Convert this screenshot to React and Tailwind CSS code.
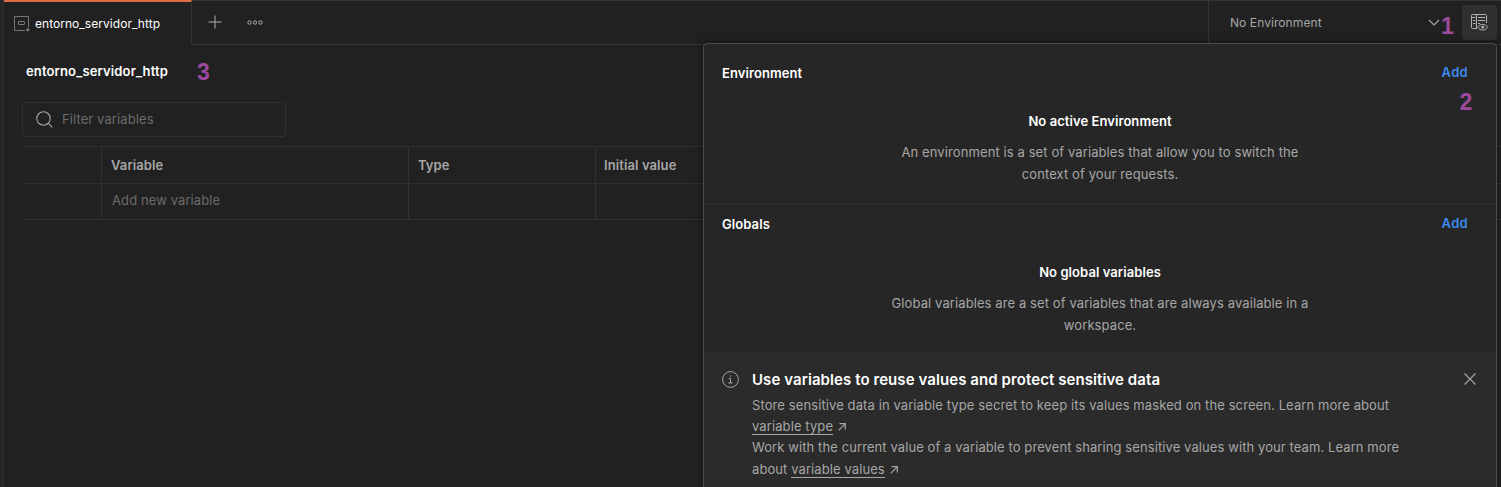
import React from "react";

function EnvironmentIcon() {
  return (
    <svg className="h-4 w-4 shrink-0 text-[#777777]" viewBox="0 0 16 16" fill="none" stroke="currentColor">
      <path d="M11 14.500H.5V.5h14V11" />
      <rect x="4.500" y="5.500" width="6" height="3" rx="0.500" />
      <rect x="12.300" y="12.300" width="3" height="3" rx="1" fill="currentColor" stroke="none" />
    </svg>
  );
}

function QuickLookIcon() {
  return (
    <svg className="h-[17px] w-[17px] text-[#b0b0b0]" viewBox="0 0 17 17" fill="none" stroke="currentColor">
      <path d="M6 14.500H1.500a1 1 0 0 1-1-1V1.500a1 1 0 0 1 1-1h13a1 1 0 0 1 1 1V9M5.500.5v14M.5 3.500h4M2 6.500h2.500M2 9.500h2.500M7 3.500h7M7 6.500h7M7 9.500h2" />
      <path d="M6.800 13.200c1.200-1.900 2.900-2.800 4.900-2.800s3.700.9 4.800 2.800c-1.100 1.900-2.800 2.800-4.800 2.800s-3.700-.9-4.900-2.800Z" />
      <circle cx="11.700" cy="13.200" r="1.100" fill="currentColor" />
    </svg>
  );
}

function LinkArrow() {
  return (
    <svg className="ml-[5px] inline-block h-[8px] w-[8px] align-baseline" viewBox="0 0 8 8" fill="none" stroke="currentColor" strokeWidth="1.2">
      <path d="M.7 7.300 7.200.8M1.500.7h5.800v5.800" />
    </svg>
  );
}

function TabBar() {
  return (
    <header className="flex h-[45px] shrink-0">
      <div className="flex w-[188px] gap-[5px] border-t-2 border-r border-t-[#de6e47] border-r-[#343434] pt-[14px] pl-[10px]">
        <EnvironmentIcon />
        <span className="text-[12px] leading-4 tracking-[0.04px] text-[#ffffff]">entorno_servidor_http</span>
      </div>
      <div className="flex flex-1 border-t border-b border-[#343434]">
        <svg className="mt-[14px] ml-[16px] h-[14px] w-[14px] text-[#b0b0b0]" viewBox="0 0 14 14" stroke="currentColor">
          <path d="M7 .5v13M.5 7h13" />
        </svg>
        <svg className="mt-[19px] ml-[25px] h-[5px] w-[16px] text-[#b0b0b0]" viewBox="0 0 16 5" fill="none" stroke="currentColor">
          <circle cx="2.500" cy="2.500" r="1.700" />
          <circle cx="8" cy="2.500" r="1.700" />
          <circle cx="13.500" cy="2.500" r="1.700" />
        </svg>
      </div>
      <div className="flex w-[293px] border-t border-b border-l border-[#343434] pl-[21px]">
        <span className="w-[198px] pt-[14px] text-[12px] leading-4 tracking-[0.08px] text-[#a6a6a6]">No Environment</span>
        <svg className="mt-[18px] h-[7px] w-[12px] text-[#a6a6a6]" viewBox="0 0 12 7" fill="none" stroke="currentColor" strokeWidth="1.100">
          <path d="m1 1 5 5 5-5" />
        </svg>
        <span className="ml-px w-[13px] pt-[12px] text-center font-['Liberation_Sans',sans-serif] text-[23px] leading-[26px] font-bold text-[#9c4a9c]">1</span>
        <div className="mt-1 ml-2 flex h-[35px] w-[35px] items-center justify-center rounded bg-[#303030]">
          <QuickLookIcon />
        </div>
      </div>
    </header>
  );
}

function VariableTable() {
  return (
    <div className="mt-[9px] ml-[18px] grid grid-cols-[80px_307px_187px_1fr] grid-rows-[37px_35px] border-t border-b border-[#303030] text-[13px] leading-4">
      <div className="border-r border-b border-[#303030]" />
      <div className="border-r border-b border-[#303030] pt-[10px] pl-[9px] font-semibold tracking-[0.1px] text-[#a6a6a6]">Variable</div>
      <div className="border-r border-b border-[#303030] pt-[10px] pl-[9px] font-semibold tracking-[0.1px] text-[#a6a6a6]">Type</div>
      <div className="border-b border-[#303030] pt-[10px] pl-[8px] font-semibold tracking-[0.1px] text-[#a6a6a6]">Initial value</div>
      <div className="border-r border-[#303030]" />
      <div className="border-r border-[#303030] pt-[8px] pl-[10px] tracking-[0.1px] text-[#6b6b6b]">Add new variable</div>
      <div className="border-r border-[#303030]" />
      <div />
    </div>
  );
}

function Editor() {
  return (
    <main>
      <div className="flex h-[57px] pl-[22px]">
        <h1 className="w-[171px] pt-[18px] text-[13px] leading-4 font-semibold tracking-[0.14px] text-white">entorno_servidor_http</h1>
        <span className="pt-[14px] font-['Liberation_Sans',sans-serif] text-[23px] leading-[26px] font-bold text-[#9c4a9c]">3</span>
      </div>
      <div className="ml-[18px] flex h-[35px] w-[264px] items-center rounded-[3px] border border-[#303030] pl-[13px] text-[#6b6b6b]">
        <svg className="h-[17px] w-[17px] text-[#a6a6a6]" viewBox="0 0 17 17" fill="none" stroke="currentColor" strokeWidth="1.100">
          <circle cx="7.500" cy="7.500" r="6.700" />
          <path d="m12.300 12.300 4 4" />
        </svg>
        <span className="-mt-px ml-[9px] text-[13px] leading-4 tracking-[0.1px]">Filter variables</span>
      </div>
      <VariableTable />
    </main>
  );
}

function Section({ title, heading, lines, annotation, className }) {
  return (
    <section className={className}>
      <div className="flex h-[48px] justify-between pr-[28px]">
        <h2 className="leading-4 font-semibold tracking-[0.08px] text-white">{title}</h2>
        <div className="relative -mt-px leading-4 font-semibold tracking-[0.3px] text-[#3d8bf0]">
          Add
          {annotation && (
            <span className="absolute top-[25px] left-[18px] font-['Liberation_Sans',sans-serif] text-[23px] leading-[26px] font-bold tracking-normal text-[#9c4a9c]">{annotation}</span>
          )}
        </div>
      </div>
      <div className="pr-[18px] text-center">
        <h3 className="leading-4 font-semibold tracking-[0.07px] text-white">{heading}</h3>
        <p className="mt-[12px] leading-[22px] tracking-[0.1px] text-[#a6a6a6]">
          {lines[0]}
          <br />
          {lines[1]}
        </p>
      </div>
    </section>
  );
}

function EnvironmentPanel() {
  return (
    <aside className="absolute top-[43px] left-[703px] flex h-[460px] w-[794px] flex-col rounded-[4px] border border-[#4c4c4c] bg-[#262626] text-[13px] shadow-[0_0_8px_rgba(0,0,0,0.4)]">
      <Section
        className="h-[160px] border-b border-[#303030] pt-[21px] pl-[18px]"
        title="Environment"
        heading="No active Environment"
        lines={["An environment is a set of variables that allow you to switch the", "context of your requests."]}
        annotation="2"
      />
      <Section
        className="h-[149px] pt-[12px] pl-[18px]"
        title="Globals"
        heading="No global variables"
        lines={["Global variables are a set of variables that are always available in a", "workspace."]}
      />
      <section className="flex flex-1 bg-[#2b2b2b] pt-[18px] pl-[18px]">
        <svg className="h-[17px] w-[17px] shrink-0 text-[#a6a6a6]" viewBox="0 0 17 17" fill="none" stroke="currentColor">
          <circle cx="8.500" cy="8.500" r="7.900" />
          <path d="M6.800 7.500h1.700v4.500M6.300 12h4.400M8.500 4.300v1.400" />
        </svg>
        <div className="ml-[13px] w-[711px] text-[#a6a6a6]">
          <h2 className="text-[15px] leading-[18px] font-semibold tracking-[0.08px] text-white">Use variables to reuse values and protect sensitive data</h2>
          <p className="mt-[6px] leading-[21px] tracking-[0.1px]">
            Store sensitive data in variable type secret to keep its values masked on the screen. Learn more about
            <br />
            <a className="border-b border-[#a6a6a6]">variable type</a>
            <LinkArrow />
          </p>
          <p className="-mt-px leading-[22px] tracking-[0.09px]">
            Work with the current value of a variable to prevent sharing sensitive values with your team. Learn more
            <br />
            about <a className="border-b border-[#a6a6a6]">variable values</a>
            <LinkArrow />
          </p>
        </div>
        <svg className="mt-[2px] ml-px h-[12px] w-[12px] text-[#a6a6a6]" viewBox="0 0 12 12" stroke="currentColor" strokeWidth="1.100">
          <path d="m.5.5 11 11M11.500.5l-11 11" />
        </svg>
      </section>
    </aside>
  );
}

export default function App() {
  return (
    <div className="relative flex h-[487px] w-[1501px] overflow-hidden bg-[#212121] font-[Inter,sans-serif]">
      <div className="w-[4px] shrink-0 border-r border-[#303030] bg-[#262626]" />
      <div className="flex min-w-0 flex-1 flex-col">
        <TabBar />
        <Editor />
      </div>
      <EnvironmentPanel />
    </div>
  );
}
